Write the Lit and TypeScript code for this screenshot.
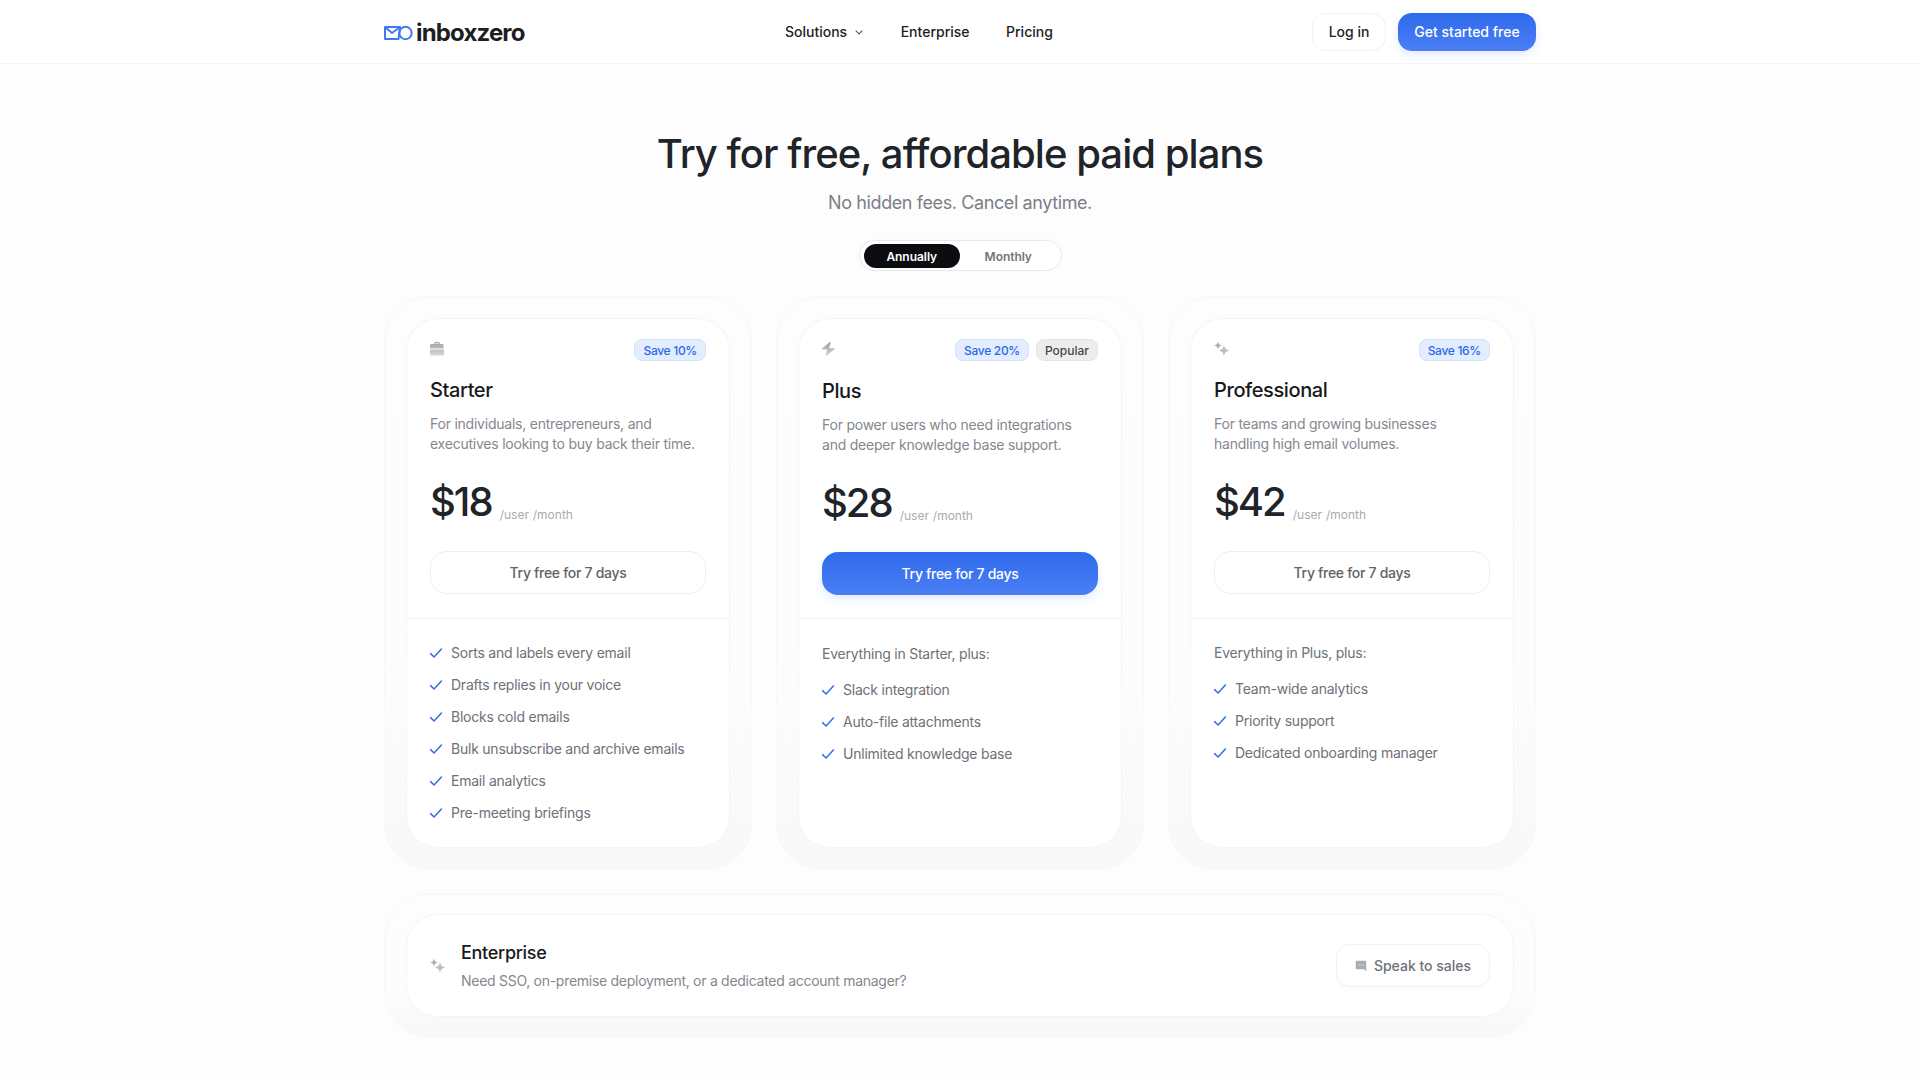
import { LitElement, html, css } from "lit";
import { customElement } from "lit/decorators.js";

const check = html`<svg class="check" viewBox="0 0 16 16" width="16" height="16" fill="none" stroke="#2f6fed" stroke-width="1.5" stroke-linecap="round" stroke-linejoin="round"><path d="M.6 8.600 4.100 12l7.300-8"/></svg>`;

const briefcase = html`<svg viewBox="1 0 16 16" width="16" height="16"><defs><linearGradient id="g1" x1="0" y1="0" x2="0" y2="1"><stop offset="0" stop-color="#9fa3a8"/><stop offset="1" stop-color="#d4d6d9"/></linearGradient></defs><path fill="url(#g1)" fill-rule="evenodd" d="M5.200 3V2.400C5.200 1.600 5.800 1 6.600 1h2.800c.8 0 1.400.6 1.400 1.400V3h2.400c.9 0 1.400.6 1.400 1.400V7.600H1V4.400C1 3.600 1.500 3 2.400 3h2.800Zm1.200 0h3.200v-.5a.3.3 0 0 0-.3-.3H6.700a.3.3 0 0 0-.3.3V3ZM1 8.500h14v4.600c0 .8-.6 1.400-1.400 1.400H2.400c-.8 0-1.400-.6-1.400-1.400V8.500Z"/></svg>`;

const bolt = html`<svg viewBox="2 0 16 16" width="16" height="16"><defs><linearGradient id="g2" x1="0" y1="0" x2="0" y2="1"><stop offset="0" stop-color="#9b9fa5"/><stop offset="1" stop-color="#d0d2d6"/></linearGradient></defs><path fill="url(#g2)" d="M9.800 1 2 7.600c-.4.400-.2 1 .3 1H7L5.800 14.300c-.1.500.4.800.8.500l7.700-6.600c.4-.4.200-1-.3-1H9.200L10.700 1.500c.1-.5-.5-.8-.9-.5Z"/></svg>`;

const sparkles = html`<svg viewBox="0 0 16 16" width="16" height="16"><path fill="#a9acb1" d="M4 .5C4.500 3 5.300 3.900 8 4.500 5.300 5.100 4.500 6 4 8.500 3.500 6 2.700 5.100 0 4.500 2.700 3.900 3.500 3 4 .5Z"/><path fill="#bcbfc3" d="M10 3.700c.6 3.700 1.900 5 5.800 5.800-3.900.8-5.200 2.100-5.800 5.800-.6-3.700-1.900-5-5.800-5.800 3.900-.8 5.200-2.100 5.800-5.800Z"/></svg>`;

const chat = html`<svg viewBox="0 0 12 12" width="12" height="12"><path fill="#a9acb1" d="M1.800.8h8.400c.6 0 1 .4 1 1v9.600L9 9.200H1.800c-.6 0-1-.4-1-1V1.800c0-.6.400-1 1-1Z"/><circle cx="4" cy="5" r=".6" fill="#fff"/><circle cx="6" cy="5" r=".6" fill="#fff"/><circle cx="8" cy="5" r=".6" fill="#fff"/></svg>`;

interface Plan {
  name: string; icon: unknown; save: string; popular?: boolean; desc: string[]; price: string;
  primary?: boolean; lead?: string; features: string[];
}

const plans: Plan[] = [
  { name: "Starter", icon: briefcase, save: "Save 10%", desc: ["For individuals, entrepreneurs, and", "executives looking to buy back their time."], price: "$18",
    features: ["Sorts and labels every email", "Drafts replies in your voice", "Blocks cold emails", "Bulk unsubscribe and archive emails", "Email analytics", "Pre-meeting briefings"] },
  { name: "Plus", icon: bolt, save: "Save 20%", popular: true, desc: ["For power users who need integrations", "and deeper knowledge base support."], price: "$28", primary: true,
    lead: "Everything in Starter, plus:", features: ["Slack integration", "Auto-file attachments", "Unlimited knowledge base"] },
  { name: "Professional", icon: sparkles, save: "Save 16%", desc: ["For teams and growing businesses", "handling high email volumes."], price: "$42",
    lead: "Everything in Plus, plus:", features: ["Team-wide analytics", "Priority support", "Dedicated onboarding manager"] },
];

@customElement("app-root")
export class AppRoot extends LitElement {
  static styles = css`
    :host { display: block; height: 1080px; overflow: hidden; font-family: Inter, "Liberation Sans", sans-serif; color: #1c1e21;
      background-color: #fefefe; background-image: radial-gradient(#fafafa 1px, transparent 1px); background-size: 4px 4px; -webkit-font-smoothing: antialiased; }
    .nav { height: 63px; background: #fff; border-bottom: 1px solid #f5f5f6; display: flex; justify-content: center; }
    .nav-in { width: 1152px; display: flex; align-items: center; }
    .logo { width: 401px; display: flex; align-items: center; gap: 3px; padding-top: 2px; box-sizing: border-box; }
    .logo-text { font-size: 24px; font-weight: 700; letter-spacing: -0.85px; color: #1c1e24; line-height: 28px; }
    .links { display: flex; align-items: center; gap: 36.500px; font-size: 14px; font-weight: 500; color: #1c1e21; }
    .sol { display: flex; align-items: center; gap: 7px; }
    .actions { margin-left: auto; display: flex; gap: 12px; }
    .btn-login { width: 74px; height: 38px; box-sizing: border-box; border: 1px solid #f2f2f3; border-radius: 14px; background: #fff;
      display: flex; align-items: center; justify-content: center; font-size: 14px; font-weight: 500; }
    .btn-blue { background: linear-gradient(#2f6aeb, #4a7ff5); color: #fff; box-shadow: 0 4px 10px rgba(60,110,240,.14); }
    .btn-start { width: 138px; height: 38px; border-radius: 14px; display: flex; align-items: center; justify-content: center; font-size: 14px; font-weight: 500; }
    main { width: 1152px; margin: 0 auto; display: flex; flex-direction: column; }
    .head { display: flex; flex-direction: column; align-items: center; padding-top: 64px; }
    h1 { margin: 0; font-size: 40px; line-height: 52px; font-weight: 500; letter-spacing: -0.94px; color: #202327; }
    .sub { margin: 9px 0 0; font-size: 18px; line-height: 28px; color: #7b7f86; letter-spacing: -0.4px; }
    .toggle { margin-top: 23px; width: 203px; height: 31px; box-sizing: border-box; padding: 3px 4px; border: 1px solid #e9e9eb; border-radius: 16px; background: #fff;
      display: flex; font-size: 12px; font-weight: 600; box-shadow: 0 0 0 4px #fcfcfc; }
    .toggle span { display: flex; align-items: center; justify-content: center; border-radius: 12px; height: 24px; width: 99px; color: #71757c; letter-spacing: -0.05px; }
    .toggle .on { background: #0b0c0f; color: #fff; }
    .grid { margin-top: 25px; display: grid; grid-template-columns: repeat(3, 368px); gap: 24px; }
    .shell { box-sizing: border-box; border: 1px solid #f8f8f9; border-radius: 44px; padding: 21px 21px 20px; background: linear-gradient(#fdfdfd, #fcfcfc 70%, #f8f8f8); }
    .plans .shell { height: 573px; }
    .card { box-sizing: border-box; height: 100%; background: #fff; border: 1px solid #f4f4f5; border-radius: 32px; display: flex; flex-direction: column; }
    .top { padding: 20px 23px 0; display: flex; flex-direction: column; border-bottom: 1px solid #f3f3f4; height: 300px; box-sizing: border-box; }
    .row1 { display: flex; align-items: center; justify-content: space-between; height: 22px; }
    .row1 > svg { margin-top: -2px; }
    .badges { display: flex; gap: 7px; }
    .badge { height: 22px; box-sizing: border-box; padding: 0 8px; border-radius: 8px; display: flex; align-items: center; font-size: 12px; font-weight: 500;
      background: #e2edfd; border: 1px solid #d3e2fb; color: #2b68ee; letter-spacing: -0.3px; }
    .badge.pop { background: #eceeec; border-color: #e3e5e3; color: #44474b; letter-spacing: 0; }
    .name { margin: 17px 0 0; font-size: 20px; line-height: 24px; font-weight: 500; color: #17191c; letter-spacing: -0.4px; }
    .desc { margin: 12px 0 0; font-size: 14px; line-height: 20px; color: #84888e; letter-spacing: -0.23px; }
    .desc div { white-space: nowrap; }
    .price { margin-top: 24px; display: flex; align-items: flex-end; gap: 8px; height: 48px; }
    .amount { font-size: 40px; line-height: 48px; font-weight: 500; letter-spacing: -2px; color: #202327; }
    .per { font-size: 12px; line-height: 16px; color: #a8abb0; padding-bottom: 3px; word-spacing: 0.5px; }
    .cta { margin-top: 25px; height: 43px; flex: none; box-sizing: border-box; border-radius: 16px; display: flex; align-items: center; justify-content: center; font-size: 14px; font-weight: 500; letter-spacing: -0.3px; }
    .cta.plain { background: #fff; border: 1px solid #efeff0; color: #5f6369; }
    .plus .name { margin-top: 18px; }
    .body { padding: 18px 23px 0; font-size: 14px; line-height: 20px; color: #6d7178; letter-spacing: -0.23px; }
    .lead { margin-top: 6px; height: 20px; margin-bottom: 10px; }
    .plus .lead { margin-top: 7px; }
    .feat { display: flex; align-items: center; gap: 5px; height: 32px; white-space: nowrap; }
    .check { flex: none; }
    .ent { margin-top: 25px; height: 143px; padding: 19px 21px 19px; }
    .ent .card { flex-direction: row; align-items: center; padding: 0 23px; gap: 15px; }
    .ent-text { flex: 1; }
    .ent-name { font-size: 18px; line-height: 24px; font-weight: 500; color: #17191c; letter-spacing: -0.3px; }
    .ent-desc { margin-top: 6px; font-size: 14px; line-height: 20px; color: #84888e; letter-spacing: -0.28px; }
    .speak { width: 154px; height: 43px; box-sizing: border-box; border: 1px solid #f1f1f2; border-radius: 14px; background: #fff;
      display: flex; align-items: center; justify-content: center; gap: 7px; font-size: 14px; font-weight: 500; color: #6d7178; box-shadow: 0 2px 6px rgba(0,0,0,.015); }
  `;

  render() {
    return html`
      <div class="nav"><div class="nav-in">
        <div class="logo">
          <svg width="29" height="17" viewBox="0 0 29 17" fill="none" stroke="#3f78f3" stroke-width="2" stroke-linejoin="round" stroke-linecap="round">
            <path d="M1 3h15l-1.500 12H1z"/><path d="M1.500 3.500 8 9l7.500-5.500"/><circle cx="21.500" cy="9" r="6.200"/>
          </svg>
          <span class="logo-text">inboxzero</span>
        </div>
        <div class="links">
          <span class="sol">Solutions <svg width="10" height="10" viewBox="0 0 10 10" fill="none" stroke="#55585d" stroke-width="1.100" stroke-linecap="round" stroke-linejoin="round"><path d="M2 3.800 5 6.800l3-3"/></svg></span>
          <span>Enterprise</span>
          <span>Pricing</span>
        </div>
        <div class="actions">
          <div class="btn-login">Log in</div>
          <div class="btn-start btn-blue">Get started free</div>
        </div>
      </div></div>
      <main>
        <div class="head">
          <h1>Try for free, affordable paid plans</h1>
          <p class="sub">No hidden fees. Cancel anytime.</p>
          <div class="toggle"><span class="on">Annually</span><span>Monthly</span></div>
        </div>
        <div class="grid plans">
          ${plans.map(p => html`
            <div class="shell ${p.primary ? "plus" : ""}"><div class="card">
              <div class="top">
                <div class="row1">
                  ${p.icon}
                  <div class="badges">
                    <span class="badge">${p.save}</span>
                    ${p.popular ? html`<span class="badge pop">Popular</span>` : null}
                  </div>
                </div>
                <div class="name">${p.name}</div>
                <div class="desc">${p.desc.map(d => html`<div>${d}</div>`)}</div>
                <div class="price"><span class="amount">${p.price}</span><span class="per">/user /month</span></div>
                <div class="cta ${p.primary ? "btn-blue" : "plain"}">Try free for 7 days</div>
              </div>
              <div class="body">
                ${p.lead ? html`<div class="lead">${p.lead}</div>` : null}
                ${p.features.map(f => html`<div class="feat">${check}${f}</div>`)}
              </div>
            </div></div>
          `)}
        </div>
        <div class="shell ent"><div class="card">
          ${sparkles}
          <div class="ent-text">
            <div class="ent-name">Enterprise</div>
            <div class="ent-desc">Need SSO, on-premise deployment, or a dedicated account manager?</div>
          </div>
          <div class="speak">${chat}Speak to sales</div>
        </div></div>
      </main>
    `;
  }
}
